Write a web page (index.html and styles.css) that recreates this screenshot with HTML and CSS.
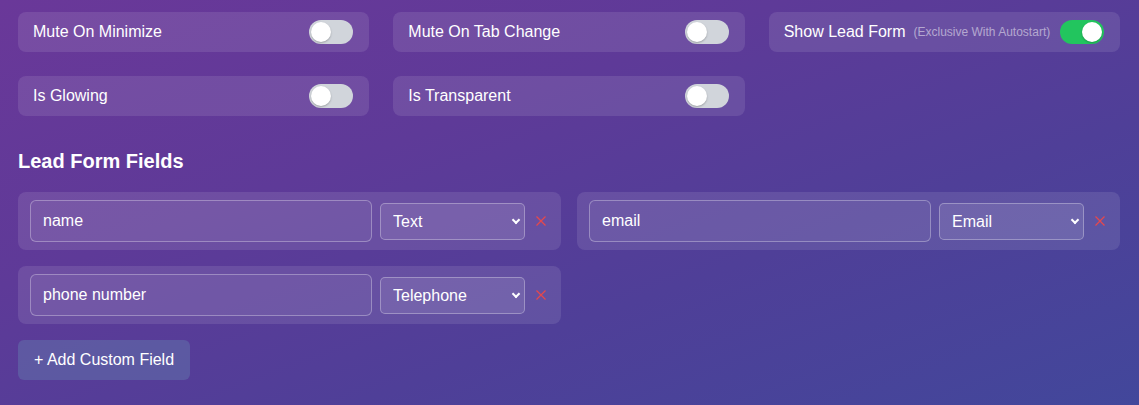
FILE: index.html
```html
<!DOCTYPE html>
<html>
<head>
<meta charset="utf-8">
<link rel="stylesheet" href="styles.css">
</head>
<body>
<div class="page">
  <div class="toggles">
    <div class="tcard"><span class="label">Mute On Minimize</span><span class="switch"><span class="knob"></span></span></div>
    <div class="tcard"><span class="label">Mute On Tab Change</span><span class="switch"><span class="knob"></span></span></div>
    <div class="tcard"><span class="label">Show Lead Form<span class="hint">(Exclusive With Autostart)</span></span><span class="switch on"><span class="knob"></span></span></div>
    <div class="tcard"><span class="label">Is Glowing</span><span class="switch"><span class="knob"></span></span></div>
    <div class="tcard"><span class="label">Is Transparent</span><span class="switch"><span class="knob"></span></span></div>
  </div>

  <h2 class="heading">Lead Form Fields</h2>

  <div class="fields">
    <div class="fcard">
      <input class="finput" type="text" value="name">
      <span class="selwrap"><select class="fsel"><option>Text</option></select></span>
      <span class="del"><svg width="10" height="10" viewBox="0 0 10 10"><path d="M0.5 0.5 L9.5 9.5 M9.5 0.5 L0.5 9.5" stroke="#e5484d" stroke-width="1.3" fill="none"/></svg></span>
    </div>
    <div class="fcard">
      <input class="finput" type="text" value="email">
      <span class="selwrap"><select class="fsel"><option>Email</option></select></span>
      <span class="del"><svg width="10" height="10" viewBox="0 0 10 10"><path d="M0.5 0.5 L9.5 9.5 M9.5 0.5 L0.5 9.5" stroke="#e5484d" stroke-width="1.3" fill="none"/></svg></span>
    </div>
    <div class="fcard">
      <input class="finput" type="text" value="phone number">
      <span class="selwrap"><select class="fsel"><option>Telephone</option></select></span>
      <span class="del"><svg width="10" height="10" viewBox="0 0 10 10"><path d="M0.5 0.5 L9.5 9.5 M9.5 0.5 L0.5 9.5" stroke="#e5484d" stroke-width="1.3" fill="none"/></svg></span>
    </div>
  </div>

  <button class="addbtn">+ Add Custom Field</button>
</div>
</body>
</html>
```
FILE: styles.css
```css
html, body {
  margin: 0;
  height: 100%;
}
body {
  background: linear-gradient(160deg, #6a3899 0%, #5e3a98 35%, #4f3f98 65%, #42479b 100%);
  font-family: "Liberation Sans", Arial, sans-serif;
  color: #fff;
  overflow: hidden;
}
.page {
  padding: 12px 19px 0 18px;
}
.toggles {
  display: grid;
  grid-template-columns: repeat(3, 1fr);
  gap: 24px;
}
.tcard {
  height: 40px;
  box-sizing: border-box;
  padding: 0 16px 0 15px;
  display: flex;
  align-items: center;
  justify-content: space-between;
  background: rgba(255, 255, 255, 0.1);
  border-radius: 8px;
}
.label {
  font-size: 16px;
  display: flex;
  align-items: center;
}
.hint {
  font-size: 12px;
  color: rgba(255, 255, 255, 0.5);
  margin-left: 8px;
}
.switch {
  width: 44px;
  height: 24px;
  border-radius: 12px;
  background: #d1d5db;
  position: relative;
  flex: none;
}
.switch.on {
  background: #22c55e;
}
.knob {
  position: absolute;
  top: 2px;
  left: 2px;
  width: 20px;
  height: 20px;
  border-radius: 50%;
  background: #fff;
  box-shadow: 0 1px 2px rgba(0, 0, 0, 0.25);
}
.switch.on .knob {
  left: 22px;
}
.heading {
  margin: 34px 0 19px 0;
  font-size: 20px;
  font-weight: bold;
  line-height: 23px;
}
.fields {
  display: grid;
  grid-template-columns: 1fr 1fr;
  gap: 16px;
}
.fcard {
  height: 58px;
  box-sizing: border-box;
  padding: 0 15px 0 12px;
  display: flex;
  align-items: center;
  background: rgba(255, 255, 255, 0.1);
  border-radius: 8px;
}
.finput {
  flex: 1;
  min-width: 0;
  height: 42px;
  box-sizing: border-box;
  padding: 0 12px;
  font: 16px "Liberation Sans", Arial, sans-serif;
  color: #fff;
  background: rgba(255, 255, 255, 0.05);
  border: 1px solid rgba(255, 255, 255, 0.3);
  border-radius: 6px;
  outline: none;
}
.selwrap {
  position: relative;
  margin-left: 8px;
  flex: none;
}
.selwrap::after {
  content: "";
  position: absolute;
  right: 6px;
  top: 14px;
  width: 4px;
  height: 4px;
  border-right: 2px solid #fff;
  border-bottom: 2px solid #fff;
  transform: rotate(45deg);
  pointer-events: none;
}
.fsel {
  appearance: none;
  -webkit-appearance: none;
  display: block;
  width: 145px;
  height: 37px;
  box-sizing: border-box;
  padding: 0 12px;
  font: 16px "Liberation Sans", Arial, sans-serif;
  color: #fff;
  background: rgba(255, 255, 255, 0.1);
  border: 1px solid rgba(255, 255, 255, 0.3);
  border-radius: 5px;
  outline: none;
}
.del {
  margin-left: 11px;
  width: 10px;
  height: 10px;
  display: flex;
  flex: none;
}
.addbtn {
  margin-top: 16px;
  height: 40px;
  padding: 0 16px;
  font: 16px "Liberation Sans", Arial, sans-serif;
  color: #fff;
  background: rgba(100, 125, 175, 0.45);
  border: none;
  border-radius: 6px;
}
```
